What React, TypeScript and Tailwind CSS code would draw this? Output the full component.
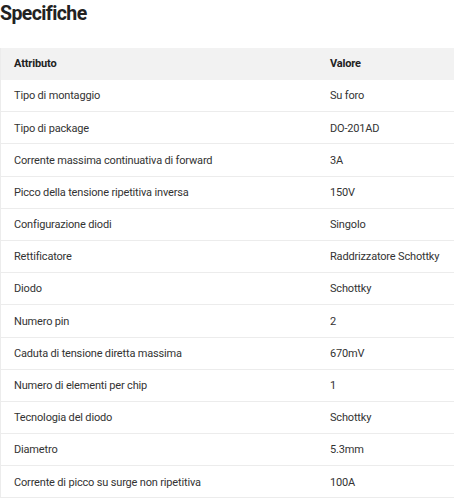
import React from "react";

const rows: [string, string][] = [
  ["Tipo di montaggio", "Su foro"],
  ["Tipo di package", "DO-201AD"],
  ["Corrente massima continuativa di forward", "3A"],
  ["Picco della tensione ripetitiva inversa", "150V"],
  ["Configurazione diodi", "Singolo"],
  ["Rettificatore", "Raddrizzatore Schottky"],
  ["Diodo", "Schottky"],
  ["Numero pin", "2"],
  ["Caduta di tensione diretta massima", "670mV"],
  ["Numero di elementi per chip", "1"],
  ["Tecnologia del diodo", "Schottky"],
  ["Diametro", "5.3mm"],
  ["Corrente di picco su surge non ripetitiva", "100A"],
];

export default function App() {
  return (
    <div className="w-[455px] h-[500px] overflow-hidden bg-white text-[#333]" style={{ fontFamily: "Roboto, 'Liberation Sans', sans-serif" }}>
      <h2 className="text-[19.5px] leading-[28px] font-bold text-[#222] tracking-[-0.6px] mb-[20px]">Specifiche</h2>
      <div className="w-[454px] border-l border-[#ececec]">
        <div className="flex h-[32px] items-center pt-[1px] bg-[#f2f2f2] text-[11px] tracking-[-0.15px] font-bold text-[#222]">
          <div className="w-[329px] pl-[13px]">Attributo</div>
          <div className="flex-1">Valore</div>
        </div>
        {rows.map(([a, v]) => (
          <div key={a} className="flex h-[32.2px] items-center pt-[2px] border-b border-[#ececec] text-[11px] tracking-[-0.17px] text-[#333]">
            <div className="w-[329px] pl-[13px]">{a}</div>
            <div className="flex-1">{v}</div>
          </div>
        ))}
      </div>
    </div>
  );
}
